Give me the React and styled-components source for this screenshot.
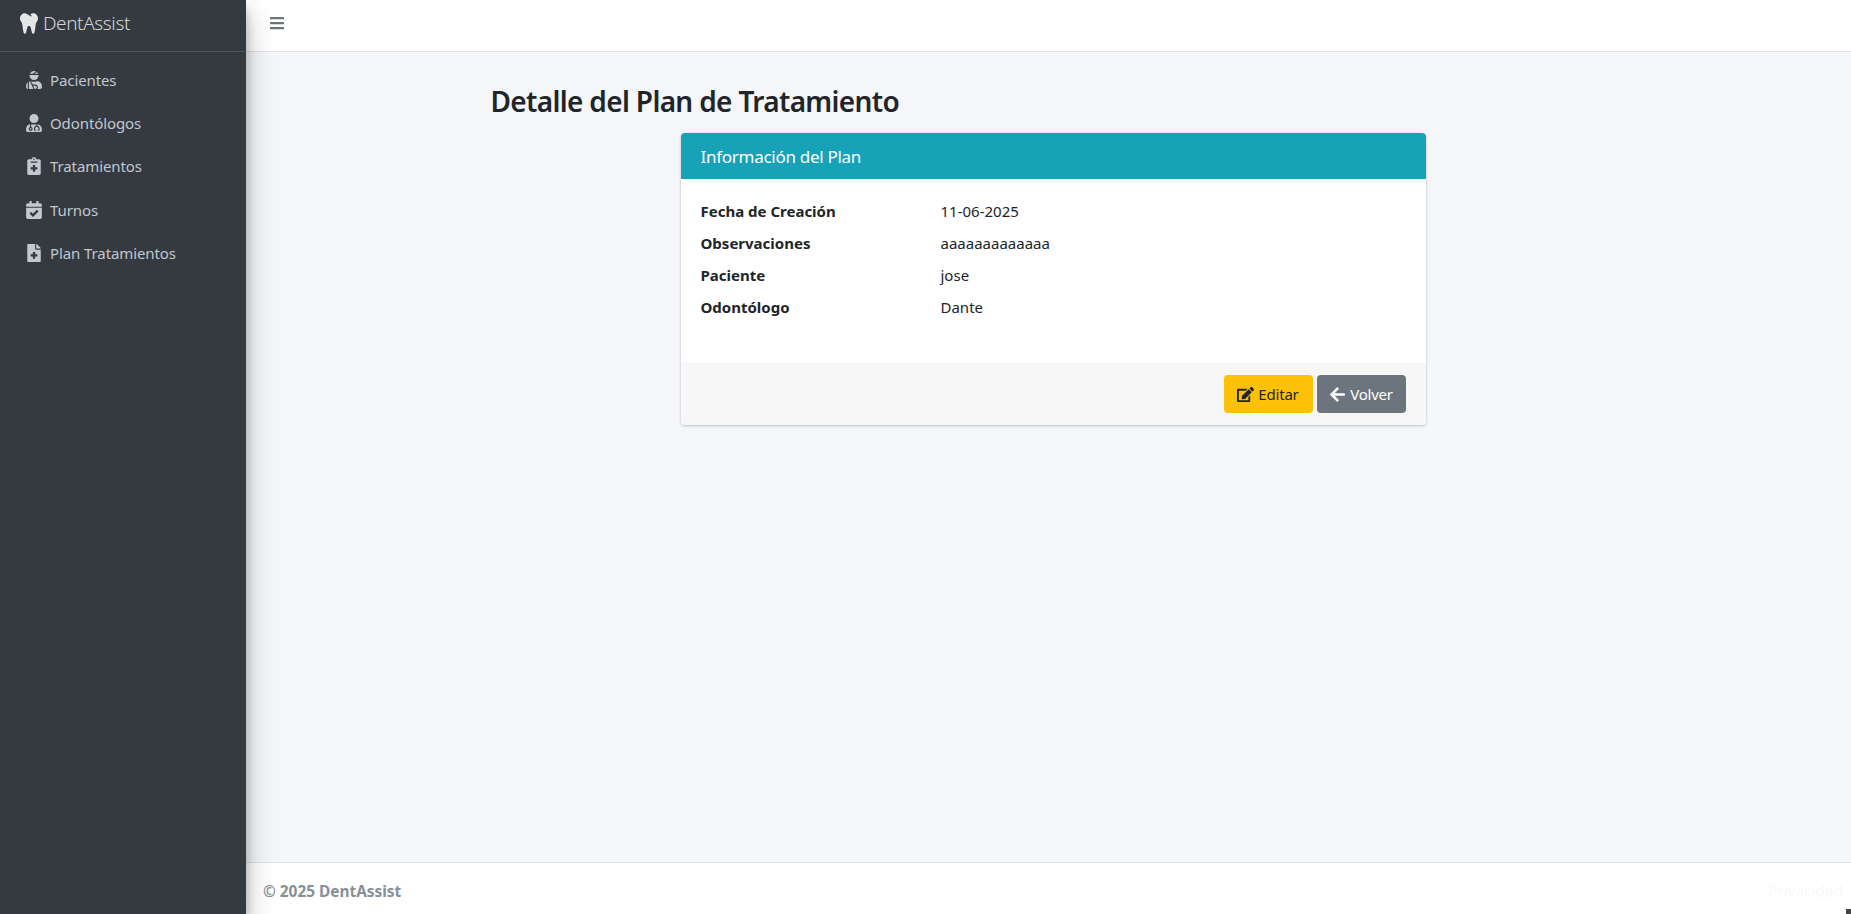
import React from "react";
import styled, { createGlobalStyle } from "styled-components";
import {
  FaTooth,
  FaUserInjured,
  FaUserMd,
  FaNotesMedical,
  FaCalendarCheck,
  FaFileMedical,
  FaBars,
  FaEdit,
  FaArrowLeft,
} from "react-icons/fa";

const Global = createGlobalStyle`
  html, body { margin: 0; padding: 0; height: 100%; overflow: hidden; }
  body { font-family: "Noto Sans", "Open Sans", sans-serif; font-size: 15px; color: #212529; background: #f4f6f9; }
  * { box-sizing: border-box; }
`;

const Shell = styled.div`
  display: flex;
  width: 1851px;
  height: 914px;
  position: relative;
`;

const Sidebar = styled.aside`
  width: 246px;
  flex: none;
  background: #343a40;
  box-shadow: 0 14px 28px rgba(0, 0, 0, 0.25), 0 10px 10px rgba(0, 0, 0, 0.22);
  z-index: 2;
  display: flex;
  flex-direction: column;
`;

const Brand = styled.div`
  height: 52px;
  border-bottom: 1px solid #4b545c;
  display: flex;
  align-items: center;
  padding-left: 20px;
  gap: 5px;
  color: rgba(255, 255, 255, 0.8);
  font-size: 19px;
  font-weight: 300;
  letter-spacing: -0.4px;
  padding-bottom: 5px;
  svg { width: 18px; height: 21px; color: #e4e6e8; }
`;

const Nav = styled.nav`
  display: flex;
  flex-direction: column;
  padding-top: 6px;
`;

const NavItem = styled.a`
  height: 43.4px;
  display: flex;
  align-items: center;
  padding-left: 26px;
  color: #c2c7d0;
  font-size: 15px;
  letter-spacing: -0.1px;
  gap: 8px;
`;

const NavIcon = styled.span`
  width: 16px;
  display: flex;
  justify-content: center;
  svg { height: 18px; width: auto; display: block; }
`;

const Main = styled.div`
  flex: 1;
  min-width: 0;
  display: flex;
  flex-direction: column;
`;

const Topbar = styled.header`
  height: 52px;
  flex: none;
  background: #fff;
  border-bottom: 1px solid #dee2e6;
  display: flex;
  align-items: center;
  padding-left: 24px;
  padding-bottom: 6px;
  color: #6c757d;
  svg { width: 14px; height: 16px; }
`;

const Content = styled.main`
  flex: 1;
  min-height: 0;
`;

const Container = styled.div`
  width: 1140px;
  margin: 0 auto;
  padding: 32px 12px 0;
`;

const Title = styled.h1`
  margin: 0 0 15px;
  font-size: 28px;
  line-height: 34px;
  font-weight: 600;
  letter-spacing: -0.66px;
  color: #212529;
`;

const Card = styled.section`
  width: 745px;
  margin-left: 190px;
  background: #fff;
  border-radius: 4px;
  box-shadow: 0 0 1px rgba(0, 0, 0, 0.125), 0 1px 3px rgba(0, 0, 0, 0.2);
  overflow: hidden;
`;

const CardHead = styled.div`
  height: 46px;
  background: #17a2b8;
  color: #fff;
  font-size: 17px;
  letter-spacing: -0.28px;
  display: flex;
  align-items: center;
  padding: 0 20px;
`;

const CardBody = styled.dl`
  margin: 0;
  padding: 16px 20px 40px;
  display: grid;
  grid-template-columns: 240px 1fr;
  grid-auto-rows: 32px;
  align-items: center;
`;

const Term = styled.dt`
  font-weight: 700;
  color: #212529;
`;

const Value = styled.dd`
  margin: 0;
  color: #212529;
`;

const CardFoot = styled.div`
  height: 62px;
  background: #f7f7f7;
  display: flex;
  justify-content: flex-end;
  align-items: center;
  gap: 4px;
  padding: 0 20px;
`;

const Button = styled.a`
  width: 89px;
  height: 38px;
  display: inline-flex;
  align-items: center;
  justify-content: center;
  gap: 4px;
  border-radius: 4px;
  font-size: 15px;
  letter-spacing: -0.2px;
  background: ${(p) => (p.$variant === "warning" ? "#ffc107" : "#6c757d")};
  color: ${(p) => (p.$variant === "warning" ? "#212529" : "#fff")};
  svg { height: 17px; width: auto; }
`;

const Footer = styled.footer`
  height: 52px;
  flex: none;
  background: #fff;
  border-top: 1px solid #dee2e6;
  display: flex;
  align-items: center;
  justify-content: space-between;
  padding: 5px 8px 0 17px;
  color: #869099;
`;

const Copy = styled.strong`
  font-size: 15.4px;
  font-weight: 700;
`;

const Faint = styled.span`
  color: #f8f9fa;
  font-size: 15.4px;
`;

const Corner = styled.span`
  position: absolute;
  right: 0;
  bottom: 0;
  width: 5px;
  height: 5px;
  background: #444;
`;

const links = [
  [FaUserInjured, "Pacientes"],
  [FaUserMd, "Odontólogos"],
  [FaNotesMedical, "Tratamientos"],
  [FaCalendarCheck, "Turnos"],
  [FaFileMedical, "Plan Tratamientos"],
];

const rows = [
  ["Fecha de Creación", "11-06-2025"],
  ["Observaciones", "aaaaaaaaaaaaa"],
  ["Paciente", "jose"],
  ["Odontólogo", "Dante"],
];

export default function App() {
  return (
    <Shell>
      <Global />
      <Sidebar>
        <Brand>
          <FaTooth />
          <span>DentAssist</span>
        </Brand>
        <Nav>
          {links.map(([Icon, label]) => (
            <NavItem key={label}>
              <NavIcon>
                <Icon />
              </NavIcon>
              {label}
            </NavItem>
          ))}
        </Nav>
      </Sidebar>
      <Main>
        <Topbar>
          <FaBars />
        </Topbar>
        <Content>
          <Container>
            <Title>Detalle del Plan de Tratamiento</Title>
            <Card>
              <CardHead>Información del Plan</CardHead>
              <CardBody>
                {rows.map(([k, v]) => (
                  <React.Fragment key={k}>
                    <Term>{k}</Term>
                    <Value>{v}</Value>
                  </React.Fragment>
                ))}
              </CardBody>
              <CardFoot>
                <Button $variant="warning">
                  <FaEdit />
                  Editar
                </Button>
                <Button>
                  <FaArrowLeft />
                  Volver
                </Button>
              </CardFoot>
            </Card>
          </Container>
        </Content>
        <Footer>
          <Copy>© 2025 DentAssist</Copy>
          <Faint>Privacidad</Faint>
        </Footer>
      </Main>
      <Corner />
    </Shell>
  );
}
